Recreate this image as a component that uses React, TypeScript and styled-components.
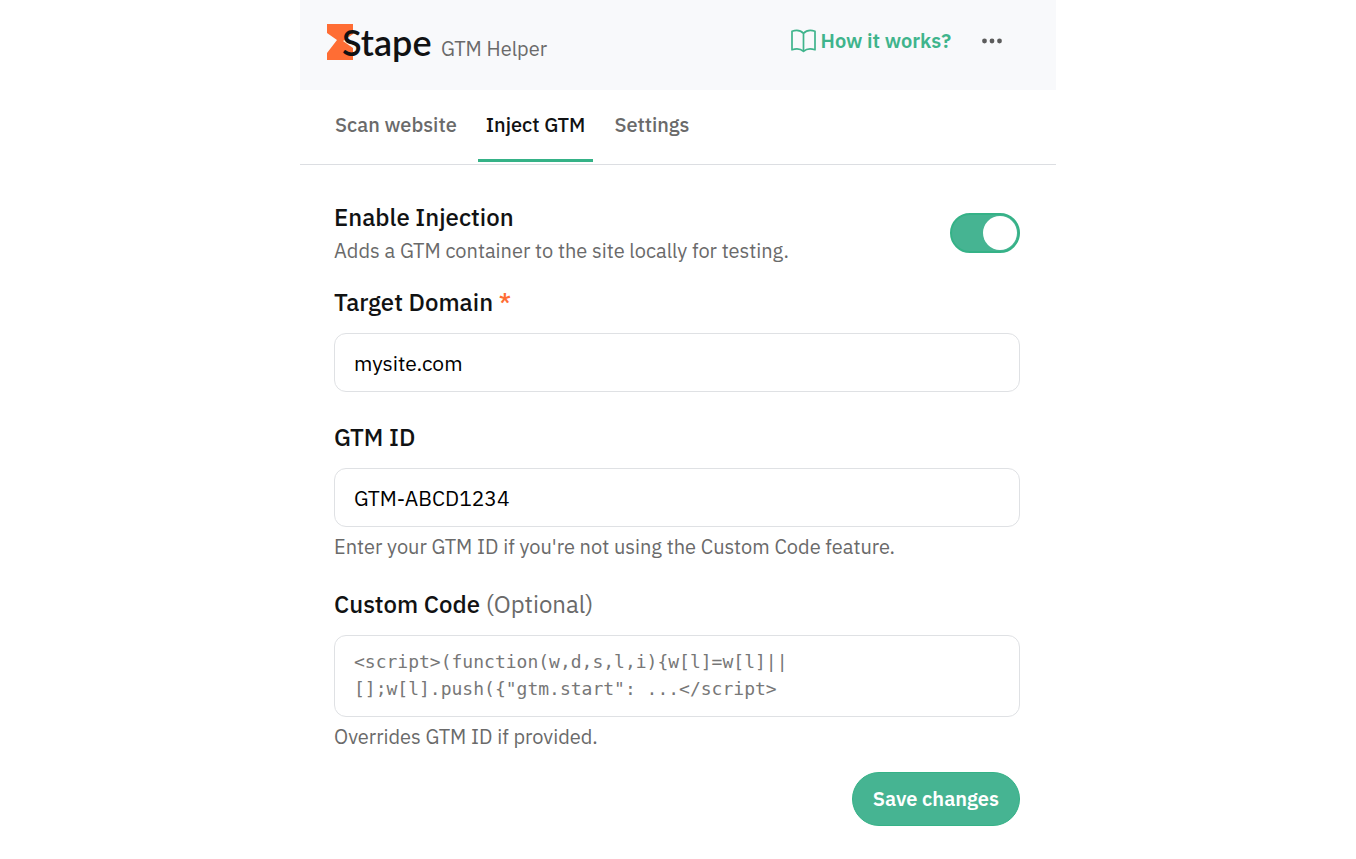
import React, { useState } from "react";
import styled, { createGlobalStyle } from "styled-components";

const GlobalStyle = createGlobalStyle`
  *, *::before, *::after { box-sizing: border-box; }
  body {
    margin: 0;
    background: #fff;
    color: #111213;
    font-family: "IBM Plex Sans", Roboto, "Noto Sans", sans-serif;
    font-size: 20px;
    line-height: 28px;
  }
  button, input, textarea { font: inherit; color: inherit; }
`;

const Popup = styled.main`
  width: 100%;
  max-width: 756px;
  margin: 0 auto;
`;

const Header = styled.header`
  display: flex;
  justify-content: space-between;
  align-items: flex-start;
  padding: 20px 48px 20px 26px;
  background: #f8f9fb;
`;

const Brand = styled.div`
  display: flex;
  align-items: flex-end;
  gap: 6px;
  height: 50px;
`;

const Logo = styled.svg`
  display: block;
  width: 109px;
  height: 50px;
  overflow: visible;
  font-family: Lato, sans-serif;
  font-size: 36px;
  font-weight: 600;
`;

const Product = styled.span`
  padding-bottom: 7px;
  color: #6a6a6a;
`;

const Actions = styled.div`
  display: flex;
  align-items: center;
  gap: 25px;
  padding-top: 7px;
`;

const HelpLink = styled.a`
  display: flex;
  align-items: center;
  gap: 5px;
  color: #3fb48c;
  font-weight: 600;
  text-decoration: none;
`;

const MenuButton = styled.button`
  display: flex;
  padding: 6px;
  border: 0;
  background: none;
  cursor: pointer;
`;

const Tabs = styled.nav`
  display: flex;
  gap: 13px;
  height: 75px;
  padding: 0 27px;
  border-bottom: 1px solid #dcdee2;
`;

const Tab = styled.button<{ $active: boolean }>`
  height: 72px;
  padding: 0 8px;
  border: 0;
  border-bottom: 3px solid ${(p) => (p.$active ? "#35b287" : "transparent")};
  background: none;
  color: ${(p) => (p.$active ? "#111213" : "#6a6a6a")};
  font-weight: 500;
  cursor: pointer;
`;

const Form = styled.form`
  padding: 36px 36px 32px 34px;
`;

const ToggleRow = styled.div`
  display: flex;
  justify-content: space-between;
  align-items: center;
  margin-bottom: 21px;
`;

const Label = styled.label`
  display: block;
  font-size: 24px;
  font-weight: 500;
  line-height: 32px;
`;

const Required = styled.span`
  color: #ff6d34;
`;

const Optional = styled.span`
  color: #6a6a6a;
  font-weight: 400;
`;

const Hint = styled.p`
  margin: 0;
  color: #6a6a6a;
`;

const ToggleText = styled.div`
  display: grid;
  gap: 4px;
`;

const Switch = styled.input`
  appearance: none;
  display: flex;
  flex: none;
  align-items: center;
  width: 70px;
  height: 40px;
  margin: 0;
  padding: 0 1px;
  border: 2px solid #35b287;
  border-radius: 20px;
  background: #46b492;
  cursor: pointer;

  &::before {
    content: "";
    width: 34px;
    height: 34px;
    border-radius: 50%;
    background: #fff;
  }
  &:checked::before { margin-left: auto; }
`;

const Field = styled.div<{ $gap: number }>`
  display: flex;
  flex-direction: column;
  margin-bottom: ${(p) => p.$gap}px;

  & > ${Label} { margin-bottom: 15px; }
  & > ${Hint} { margin-top: 6px; }
`;

const TextInput = styled.input`
  width: 100%;
  height: 59px;
  padding: 0 19px;
  border: 1px solid #dfe1e4;
  border-radius: 12px;
  background: #fff;
  color: #000;
  font-size: 21px;
`;

const CodeInput = styled.textarea`
  display: block;
  width: 100%;
  height: 82px;
  padding: 12px 19px;
  border: 1px solid #dfe1e4;
  border-radius: 12px;
  background: #fff;
  font-family: "DejaVu Sans Mono", monospace;
  font-size: 18px;
  line-height: 27px;
  resize: none;
  overflow: hidden;

  &::placeholder { color: #777; opacity: 1; }
`;

const Footer = styled.div`
  display: flex;
  justify-content: flex-end;
`;

const SaveButton = styled.button`
  height: 54px;
  padding: 0 20px;
  border: 1px solid #35b287;
  border-radius: 27px;
  background: #46b492;
  color: #fff;
  font-weight: 600;
  cursor: pointer;
`;

const tabs = ["Scan website", "Inject GTM", "Settings"];

export default function App() {
  const [tab, setTab] = useState("Inject GTM");
  return (
    <>
      <GlobalStyle />
      <Popup>
        <Header>
          <Brand>
            <Logo viewBox="0 0 109 50" role="img" aria-label="Stape">
              <path d="M1 4H27V14L17 21L27 28V40H1V33L11 20L1 13Z" fill="#ff6d34" />
              <text x="16" y="36" fill="#111213">Stape</text>
            </Logo>
            <Product>GTM Helper</Product>
          </Brand>
          <Actions>
            <HelpLink href="#how-it-works">
              <svg width="25" height="24" viewBox="0 0 25 24" fill="none" stroke="currentColor" strokeWidth="1.7" strokeLinejoin="round" aria-hidden="true">
                <path d="M12.500 4.300C9.500 1.200 5 .9 1 2.300V20.800C5 19.500 9.500 19.700 12.500 22.300C15.500 19.700 20 19.500 24 20.800V2.300C20 .9 15.500 1.200 12.500 4.300ZM12.500 4.300V22.300" />
              </svg>
              How it works?
            </HelpLink>
            <MenuButton type="button" aria-label="More options">
              <svg width="20" height="6" viewBox="0 0 20 6" fill="#5c5c5c" aria-hidden="true">
                <circle cx="2.500" cy="3" r="2.400" />
                <circle cx="10" cy="3" r="2.400" />
                <circle cx="17.500" cy="3" r="2.400" />
              </svg>
            </MenuButton>
          </Actions>
        </Header>
        <Tabs>
          {tabs.map((name) => (
            <Tab key={name} type="button" $active={name === tab} onClick={() => setTab(name)}>
              {name}
            </Tab>
          ))}
        </Tabs>
        <Form onSubmit={(e) => e.preventDefault()}>
          <ToggleRow>
            <ToggleText>
              <Label htmlFor="enable">Enable Injection</Label>
              <Hint>Adds a GTM container to the site locally for testing.</Hint>
            </ToggleText>
            <Switch id="enable" type="checkbox" role="switch" defaultChecked />
          </ToggleRow>
          <Field $gap={29}>
            <Label htmlFor="domain">
              Target Domain <Required>*</Required>
            </Label>
            <TextInput id="domain" type="text" defaultValue="mysite.com" required />
          </Field>
          <Field $gap={27}>
            <Label htmlFor="gtm-id">GTM ID</Label>
            <TextInput id="gtm-id" type="text" defaultValue="GTM-ABCD1234" />
            <Hint>Enter your GTM ID if you're not using the Custom Code feature.</Hint>
          </Field>
          <Field $gap={21}>
            <Label htmlFor="code">
              Custom Code <Optional>(Optional)</Optional>
            </Label>
            <CodeInput
              id="code"
              placeholder={'<script>(function(w,d,s,l,i){w[l]=w[l]||\n[];w[l].push({"gtm.start": ...</script>'}
            />
            <Hint>Overrides GTM ID if provided.</Hint>
          </Field>
          <Footer>
            <SaveButton type="submit">Save changes</SaveButton>
          </Footer>
        </Form>
      </Popup>
    </>
  );
}
